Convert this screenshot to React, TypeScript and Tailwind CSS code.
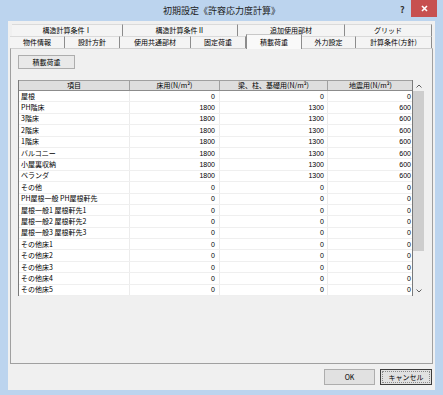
import React from "react"

const font = { fontFamily: '"Noto Sans CJK JP", "Noto Sans", sans-serif' }
const numFont = { fontFamily: '"Liberation Sans", "Noto Sans", sans-serif' }

const rows: [string, number, number, number][] = [
  ["屋根", 0, 0, 0],
  ["PH階床", 1800, 1300, 600],
  ["3階床", 1800, 1300, 600],
  ["2階床", 1800, 1300, 600],
  ["1階床", 1800, 1300, 600],
  ["バルコニー", 1800, 1300, 600],
  ["小屋裏収納", 1800, 1300, 600],
  ["ベランダ", 1800, 1300, 600],
  ["その他", 0, 0, 0],
  ["PH屋根一般 PH屋根軒先", 0, 0, 0],
  ["屋根一般1 屋根軒先1", 0, 0, 0],
  ["屋根一般2 屋根軒先2", 0, 0, 0],
  ["屋根一般3 屋根軒先3", 0, 0, 0],
  ["その他床1", 0, 0, 0],
  ["その他床2", 0, 0, 0],
  ["その他床3", 0, 0, 0],
  ["その他床4", 0, 0, 0],
  ["その他床5", 0, 0, 0],
]

const backTabs = [
  { label: "構造計算条件Ⅰ", w: "w-[111px]" },
  { label: "構造計算条件Ⅱ", w: "w-[115px]" },
  { label: "追加使用部材", w: "w-[107px]" },
  { label: "グリッド", w: "w-[87px]" },
]

const frontTabs = [
  { label: "物件情報", w: "w-[55px]" },
  { label: "設計方針", w: "w-[55px]" },
  { label: "使用共通部材", w: "w-[71px]" },
  { label: "固定荷重", w: "w-[55px]" },
  { label: "積載荷重", w: "w-[56px]", active: true },
  { label: "外力設定", w: "w-[54px]" },
  { label: "計算条件(方針)", w: "w-[76px]" },
]

export default function App() {
  return (
    <div className="w-[443px] h-[395px] bg-[#bcd4ee] flex flex-col text-black antialiased" style={font}>
      {/* title bar */}
      <div className="h-[21px] relative flex items-center justify-center">
        <span className="text-[9px] text-[#222] leading-none">初期設定《許容応力度計算》</span>
        <span className="absolute left-[400px] top-[5px] text-[9px] font-bold leading-none text-[#333]">?</span>
        <div className="absolute left-[411px] top-0 w-[26px] h-[17px] bg-[#c75050] flex items-center justify-center">
          <svg width="7" height="7" viewBox="0 0 7 7">
            <path d="M1 1L6 6M6 1L1 6" stroke="white" strokeWidth="1.6" />
          </svg>
        </div>
      </div>

      {/* client */}
      <div className="mx-[8px] flex-1 mb-[5px] bg-[#f0f0f0] flex flex-col pt-[3px]">
        <div className="flex ml-[4px] h-[12px]">
          {backTabs.map((t) => (
            <div
              key={t.label}
              className={`${t.w} h-full flex items-center justify-center text-[7px] leading-none border-t border-t-[#dadada] border-r border-r-[#8c8c8c] bg-[#f4f4f4]`}
            >
              {t.label}
            </div>
          ))}
        </div>
        <div className="flex ml-[2px] h-[12px] relative z-10">
          {frontTabs.map((t) =>
            t.active ? (
              <div
                key={t.label}
                className={`${t.w} h-[15px] -mt-[2px] flex items-center justify-center text-[7px] leading-none bg-[#f9f9f9] border-x border-x-[#8c8c8c] border-t border-t-[#c8c8c8]`}
              >
                {t.label}
              </div>
            ) : (
              <div
                key={t.label}
                className={`${t.w} h-full flex items-center justify-center text-[7px] leading-none border-t border-t-[#dadada] border-r border-r-[#8c8c8c] bg-[#f4f4f4]`}
              >
                {t.label}
              </div>
            )
          )}
        </div>

        {/* tab page */}
        <div className="ml-[2px] w-[423px] h-[316px] border border-[#a0a0a0] border-t-[#d0d0d0] bg-[#f0f0f0] flex flex-col pl-[7px] pt-[6px]">
          <div className="w-[57px] h-[14px] border border-[#adadad] bg-[#e9e9e9] flex items-center justify-center text-[7px] leading-none">
            積載荷重
          </div>

          <div className="mt-[11px] flex">
            <div className="w-[395px] bg-white border-l border-l-[#7a7a7a] border-r border-r-[#7a7a7a]">
              <div className="grid grid-cols-[111px_90px_108px_85px] h-[11px] bg-[#dedede] border-t border-t-[#a0a0a0] border-b border-b-[#8c8c8c] text-[7px] leading-none">
                <div className="flex items-center justify-center border-r border-r-[#a0a0a0]">項目</div>
                <div className="flex items-center justify-center border-r border-r-[#a0a0a0]">床用(N/m²)</div>
                <div className="flex items-center justify-center border-r border-r-[#a0a0a0]">梁、柱、基礎用(N/m²)</div>
                <div className="flex items-center justify-center">地震用(N/m²)</div>
              </div>
              {rows.map(([name, a, b, c]) => (
                <div
                  key={name}
                  className="grid grid-cols-[111px_90px_108px_85px] h-[11.4px] border-b border-b-[#efefef] text-[7px] leading-none text-black"
                >
                  <div className="flex items-center pl-[2px] border-r border-r-[#ececec] whitespace-nowrap">{name}</div>
                  <div className="flex items-center justify-end pr-[4px] border-r border-r-[#ececec]" style={numFont}>{a}</div>
                  <div className="flex items-center justify-end pr-[3px] border-r border-r-[#ececec]" style={numFont}>{b}</div>
                  <div className="flex items-center justify-end pr-[2px]" style={numFont}>{c}</div>
                </div>
              ))}
            </div>

            {/* scrollbar */}
            <div className="w-[14px] flex flex-col items-start">
              <div className="w-[12px] h-[11px] flex items-center justify-center">
                <svg width="6" height="4" viewBox="0 0 6 4">
                  <path d="M0.5 3.5L3 1L5.5 3.5" stroke="#606060" fill="none" strokeWidth="1" />
                </svg>
              </div>
              <div className="w-[11px] h-[160px] bg-[#cdcdcd]" />
              <div className="flex-1" />
              <div className="w-[12px] h-[11px] flex items-center justify-center">
                <svg width="6" height="4" viewBox="0 0 6 4">
                  <path d="M0.5 0.5L3 3L5.5 0.5" stroke="#606060" fill="none" strokeWidth="1" />
                </svg>
              </div>
            </div>
          </div>
        </div>

        {/* buttons */}
        <div className="flex justify-end gap-[5px] pr-[3px] mt-[5px]">
          <div className="w-[51px] h-[16px] border border-[#adadad] bg-[#e1e1e1] flex items-center justify-center text-[7px] leading-none">
            OK
          </div>
          <div className="w-[52px] h-[16px] border border-[#3c3c3c] bg-[#e1e1e1] p-[1px]">
            <div className="w-full h-full border border-dotted border-[#8a8a8a] flex items-center justify-center text-[7px] leading-none">
              キャンセル
            </div>
          </div>
        </div>
      </div>
    </div>
  )
}
